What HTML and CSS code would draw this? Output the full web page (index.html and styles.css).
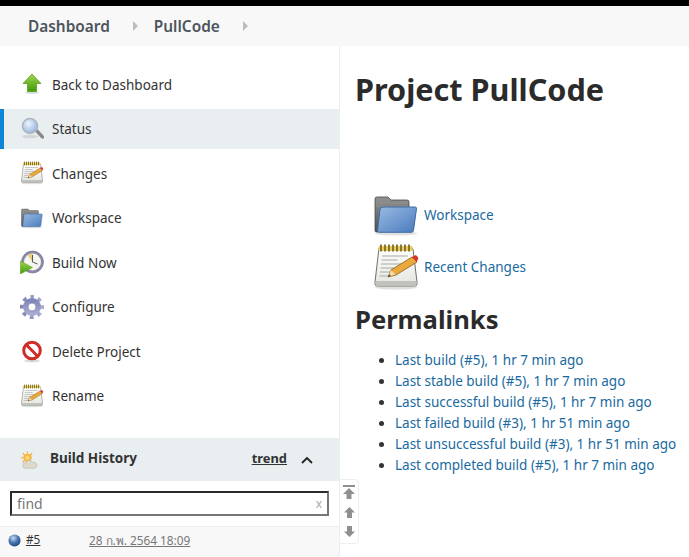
FILE: index.html
```html
<!DOCTYPE html>
<html lang="en">
<head>
<meta charset="utf-8">
<title>PullCode</title>
<link rel="stylesheet" href="styles.css">
</head>
<body>
<svg class="defs" width="0" height="0" aria-hidden="true">
  <defs>
    <linearGradient id="gGreen" x1="0" y1="0" x2="0" y2="1"><stop offset="0" stop-color="#a4d64e"/><stop offset="1" stop-color="#3f9a06"/></linearGradient>
    <linearGradient id="gFolder" x1="0" y1="0" x2="1" y2="1"><stop offset="0" stop-color="#9abbe3"/><stop offset="1" stop-color="#4a7bbd"/></linearGradient>
    <linearGradient id="gGrey" x1="0" y1="0" x2="0" y2="1"><stop offset="0" stop-color="#929292"/><stop offset="1" stop-color="#505050"/></linearGradient>
    <linearGradient id="gPaper" x1="0" y1="0" x2="0" y2="1"><stop offset="0" stop-color="#fff"/><stop offset="1" stop-color="#e4e4e0"/></linearGradient>
    <linearGradient id="gGear" x1="0" y1="0" x2="0" y2="1"><stop offset="0" stop-color="#7f86b8"/><stop offset="1" stop-color="#a9abd0"/></linearGradient>
    <radialGradient id="gLens" cx=".4" cy=".35" r=".7"><stop offset="0" stop-color="#eef5fc"/><stop offset="1" stop-color="#8fb2dd"/></radialGradient>
    <radialGradient id="gBall" cx=".4" cy=".3" r=".75"><stop offset="0" stop-color="#c9daf0"/><stop offset=".5" stop-color="#4a78b4"/><stop offset="1" stop-color="#1c3f74"/></radialGradient>
    <radialGradient id="gSun" cx=".5" cy=".5" r=".5"><stop offset="0" stop-color="#ffe98a"/><stop offset="1" stop-color="#f5a623"/></radialGradient>
    <symbol id="iNotepad" viewBox="0 0 48 48">
      <ellipse cx="24" cy="44.500" rx="21" ry="2" fill="#000" opacity=".12"/>
      <path d="M7 5h33l1 1 4 33v2a2 2 0 0 1-2 2H5a2 2 0 0 1-2-2v-2z" fill="url(#gPaper)" stroke="#6f6f68" stroke-width="1"/>
      <path d="M3.500 38h41v3a2 2 0 0 1-2 2h-37a2 2 0 0 1-2-2z" fill="#c2c2bc"/>
      <path d="M6.500 3h34v5h-34z" fill="#e8cf62"/>
      <path d="M9 2v6M13 2v6M17 2v6M21 2v6M25 2v6M29 2v6M33 2v6M37 2v6" stroke="#6f5f20" stroke-width="1.600" stroke-linecap="round"/>
      <path d="M10 13h26M9.500 17h16M9 21h24M8.500 25h14M8 29h12M7.500 33h9" stroke="#a8a8a4" stroke-width="1.200"/>
      <path d="M16 34l3-7L40 14l5 5-21 13z" fill="#e9a93c" stroke="#8a5a16" stroke-width=".8"/>
      <path d="M16 34l3-7 4.500 4.500z" fill="#f3d9a6"/>
      <path d="M16 34l1.200-2.800 1.700 1.700z" fill="#333"/>
      <path d="M40 14l2.500-1.500a2 2 0 0 1 2.500.5l1 1.500a2 2 0 0 1-.5 2.500L45 19z" fill="#d9342b"/>
    </symbol>
    <symbol id="iFolder" viewBox="0 0 48 48">
      <ellipse cx="24" cy="42.500" rx="21" ry="2" fill="#000" opacity=".12"/>
      <path d="M3 8a2 2 0 0 1 2-2h11l3 3h16a2 2 0 0 1 2 2v6H9L6 41H4.500A1.500 1.500 0 0 1 3 39.500z" fill="url(#gGrey)" stroke="#4a4a4a" stroke-width=".8"/>
      <path d="M4 12h32M4 15h32" stroke="#b0b0b0" stroke-width=".6" opacity=".5"/>
      <path d="M11 16h32a1.500 1.500 0 0 1 1.500 1.700L41.500 39.500a2 2 0 0 1-2 1.800H7a1.500 1.500 0 0 1-1.500-1.700L8 18.500A3 3 0 0 1 11 16z" fill="url(#gFolder)" stroke="#3e6aa3" stroke-width="1"/>
    </symbol>
  </defs>
</svg>
<header class="topline"></header>
<nav class="crumbs">
  <a class="crumb" href="#">Dashboard</a>
  <svg class="crumb-arrow" viewBox="0 0 5 10" aria-hidden="true"><path d="M0 0l5 5-5 5z"/></svg>
  <a class="crumb" href="#">PullCode</a>
  <svg class="crumb-arrow" viewBox="0 0 5 10" aria-hidden="true"><path d="M0 0l5 5-5 5z"/></svg>
</nav>
<div class="layout">
  <aside class="sidebar">
    <ul class="tasks">
      <li class="task">
        <svg class="task-icon" viewBox="0 0 24 24"><ellipse cx="12" cy="20.500" rx="7" ry="1.500" fill="#000" opacity=".15"/><path d="M12 2l9 9.500h-4.500V19.500h-9V11.500H3z" fill="url(#gGreen)" stroke="#4d9a12" stroke-width=".7"/></svg>
        <span class="task-label">Back to Dashboard</span>
      </li>
      <li class="task task-active">
        <svg class="task-icon" viewBox="0 0 24 24"><ellipse cx="10" cy="19.500" rx="8" ry="1.800" fill="#000" opacity=".1"/><path d="M15 14l2-2 6.500 7a1.400 1.400 0 0 1-2 2z" fill="#8a8a8a" stroke="#6d6d6d" stroke-width=".5"/><circle cx="10" cy="9" r="7.500" fill="url(#gLens)" stroke="#aeb6c0" stroke-width="1.600"/></svg>
        <span class="task-label">Status</span>
      </li>
      <li class="task">
        <svg class="task-icon"><use href="#iNotepad"/></svg>
        <span class="task-label">Changes</span>
      </li>
      <li class="task">
        <svg class="task-icon"><use href="#iFolder"/></svg>
        <span class="task-label">Workspace</span>
      </li>
      <li class="task">
        <svg class="task-icon" viewBox="0 0 24 24"><circle cx="12.500" cy="12" r="11" fill="#8d88a8" stroke="#6f6a8e" stroke-width=".6"/><circle cx="12.500" cy="12" r="8.500" fill="#f6f5ef"/><path d="M12.500 12L7.500 5a8.500 8.500 0 0 1 5-1.500z" fill="#e9cf7e"/><path d="M12.500 12V5M12.500 12l5 2" stroke="#555" stroke-width="1" fill="none"/><path d="M0.300 11L12.500 17.500 0.300 24z" fill="url(#gGreen)" stroke="#4d9a12" stroke-width=".5"/></svg>
        <span class="task-label">Build Now</span>
      </li>
      <li class="task">
        <svg class="task-icon" viewBox="0 0 24 24"><circle cx="12" cy="12" r="10" fill="none" stroke="url(#gGear)" stroke-width="4" stroke-dasharray="3.800 4.054" stroke-dashoffset="1.900" transform="rotate(-90 12 12)"/><circle cx="12" cy="12" r="6.500" fill="none" stroke="url(#gGear)" stroke-width="5"/><circle cx="12" cy="12" r="4" fill="#fff" stroke="#70739c" stroke-width=".7"/></svg>
        <span class="task-label">Configure</span>
      </li>
      <li class="task">
        <svg class="task-icon" viewBox="0 0 24 24"><ellipse cx="12" cy="22" rx="8" ry="1.500" fill="#000" opacity=".15"/><circle cx="12" cy="11.500" r="8.300" fill="#fff" stroke="#d02c27" stroke-width="3"/><path d="M6.300 5.800l11.400 11.400" stroke="#d02c27" stroke-width="3"/></svg>
        <span class="task-label">Delete Project</span>
      </li>
      <li class="task">
        <svg class="task-icon"><use href="#iNotepad"/></svg>
        <span class="task-label">Rename</span>
      </li>
    </ul>
    <section class="history">
      <div class="history-head">
        <svg class="history-icon" viewBox="0 0 24 24"><circle cx="10" cy="9" r="5.500" fill="url(#gSun)"/><path d="M10 .5v2.500M10 15v2.500M1.500 9h2.500M3.800 3l2 2M16.200 3l-2 2M3.800 15l2-2" stroke="#f5a623" stroke-width="1.500"/><path d="M7 23a3.500 3.500 0 0 1 .3-7 5 5 0 0 1 9.400-.7 3.900 3.900 0 0 1 3.300 7.700z" fill="#dcdacd" stroke="#a9a796" stroke-width=".6"/></svg>
        <span class="history-title">Build History</span>
        <a class="history-trend" href="#">trend</a>
        <svg class="history-chevron" viewBox="0 0 12 8"><path d="M1 7l5-5 5 5" fill="none" stroke="#222" stroke-width="1.800"/></svg>
      </div>
      <div class="search">
        <div class="search-box">
          <span class="search-text">find</span>
          <span class="search-clear">x</span>
        </div>
      </div>
      <div class="build-row">
        <svg class="build-ball" viewBox="0 0 14 14"><circle cx="7" cy="7" r="6.500" fill="url(#gBall)"/></svg>
        <a class="build-num" href="#">#5</a>
        <a class="build-date" href="#">28 ก.พ. 2564 18:09</a>
      </div>
    </section>
    <div class="scroll-tools">
      <svg class="scroll-icon scroll-icon-top" viewBox="0 0 12 14"><path d="M0 0h12v2H0zM6 3l6 6H8.500v5h-5V9H0z"/></svg>
      <svg class="scroll-icon" viewBox="0 0 11 11"><path d="M5.500 0L11 5.500H8V11H3V5.500H0z"/></svg>
      <svg class="scroll-icon" viewBox="0 0 11 11"><path d="M3 0h5v5.500h3L5.500 11 0 5.500h3z"/></svg>
    </div>
  </aside>
  <main class="content">
    <h1 class="title">Project PullCode</h1>
    <div class="links">
      <div class="link-row">
        <svg class="link-icon"><use href="#iFolder"/></svg>
        <a class="link" href="#">Workspace</a>
      </div>
      <div class="link-row">
        <svg class="link-icon"><use href="#iNotepad"/></svg>
        <a class="link" href="#">Recent Changes</a>
      </div>
    </div>
    <h2 class="subtitle">Permalinks</h2>
    <ul class="permalinks">
      <li><a class="link" href="#">Last build (#5), 1 hr 7 min ago</a></li>
      <li><a class="link" href="#">Last stable build (#5), 1 hr 7 min ago</a></li>
      <li><a class="link" href="#">Last successful build (#5), 1 hr 7 min ago</a></li>
      <li><a class="link" href="#">Last failed build (#3), 1 hr 51 min ago</a></li>
      <li><a class="link" href="#">Last unsuccessful build (#3), 1 hr 51 min ago</a></li>
      <li><a class="link" href="#">Last completed build (#5), 1 hr 7 min ago</a></li>
    </ul>
  </main>
</div>
</body>
</html>
```
FILE: styles.css
```css
* { box-sizing: border-box; }
html, body { margin: 0; height: 100%; overflow: hidden; background: #fff; }
body {
  display: flex;
  flex-direction: column;
  font-family: "Noto Sans", "Open Sans", sans-serif;
  font-size: 13.5px;
  color: #333;
}
.defs { position: absolute; }
a { color: inherit; }

.topline { flex: none; height: 6px; background: #000; }
.crumbs {
  flex: none;
  height: 40px;
  display: flex;
  align-items: center;
  padding-left: 28px;
  background: #f8f8f8;
}
.crumb {
  font-size: 15.4px;
  font-weight: 600;
  color: #4d545d;
  text-decoration: none;
}
.crumb-arrow { width: 5px; height: 10px; margin: 0 16px 0 23px; fill: #bdbdbd; }

.layout { flex: 1; min-height: 0; display: flex; }
.sidebar {
  position: relative;
  flex: none;
  width: 340px;
  display: flex;
  flex-direction: column;
  padding-top: 18px;
  border-right: 1px solid #eceeef;
}
.tasks {
  list-style: none;
  margin: 0;
  padding: 0;
  display: flex;
  flex-direction: column;
  gap: 4.5px;
}
.task {
  height: 40px;
  display: flex;
  align-items: center;
  gap: 8px;
  padding-left: 20px;
  color: #333;
}
.task-label { padding-top: 1px; }
.task-active { background: #e9eef0; box-shadow: inset 4px 0 0 #0b87d6; }
.task-icon { width: 24px; height: 24px; flex: none; }

.history { margin-top: 22.5px; flex: 1; display: flex; flex-direction: column; }
.history-head {
  height: 43px;
  display: flex;
  align-items: center;
  padding: 0 0 3px 20px;
  background: #e9eef0;
}
.history-icon { width: 18px; height: 18px; margin: 3px 12px 0 0; flex: none; }
.history-title { flex: 1; font-weight: 700; color: #333; }
.history-trend { font-size: 12.9px; font-weight: 700; color: #333; margin-right: 14px; }
.history-chevron { width: 12px; height: 8px; margin: 3px 26px 0 0; }
.search { height: 46px; padding: 10px 10px 0; border-bottom: 1px solid #e9eef0; }
.search-box {
  height: 25px;
  display: flex;
  align-items: center;
  justify-content: space-between;
  padding: 0 5px;
  border: 2px solid;
  border-color: #2b2b2b #767676 #767676 #2b2b2b;
  color: #777;
  background: #fff;
  font-size: 14px;
}
.search-clear { font-size: 12px; color: #aaa; }
.build-row {
  flex: 1;
  display: flex;
  align-items: flex-start;
  padding: 4px 0 0 8px;
  background: #f8f8f8;
  font-size: 11.8px;
}
.build-ball { width: 13px; height: 13px; margin: 3px 5px 0 0; flex: none; }
.build-num { width: 63px; color: #333; }
.build-date { color: #777; }

.scroll-tools {
  position: absolute;
  left: 339px;
  top: 433px;
  width: 20px;
  height: 65px;
  display: flex;
  flex-direction: column;
  align-items: center;
  gap: 8px;
  padding-top: 5px;
  background: #fff;
  border: 1px solid #eceeef;
  border-radius: 0 4px 4px 0;
}
.scroll-icon { width: 11px; height: 11px; flex: none; fill: #8f8f8f; }
.scroll-icon-top { width: 12px; height: 14px; }

.content { flex: 1; min-width: 0; padding-left: 15px; }
.title {
  margin: 22px 0 0;
  font-size: 30.6px;
  line-height: 42px;
  font-weight: 700;
  color: #2b2b2b;
}
.links { margin: 79px 0 0 17px; display: flex; flex-direction: column; }
.link-row { height: 52px; display: flex; align-items: center; gap: 4px; }
.link-icon { width: 48px; height: 48px; flex: none; }
.link { color: #1a6aa0; text-decoration: none; }
.subtitle {
  margin: 9px 0 0;
  font-size: 25.6px;
  line-height: 36px;
  font-weight: 700;
  color: #2b2b2b;
}
.permalinks { margin: 12px 0 0; padding-left: 40px; line-height: 21px; white-space: nowrap; }
```
